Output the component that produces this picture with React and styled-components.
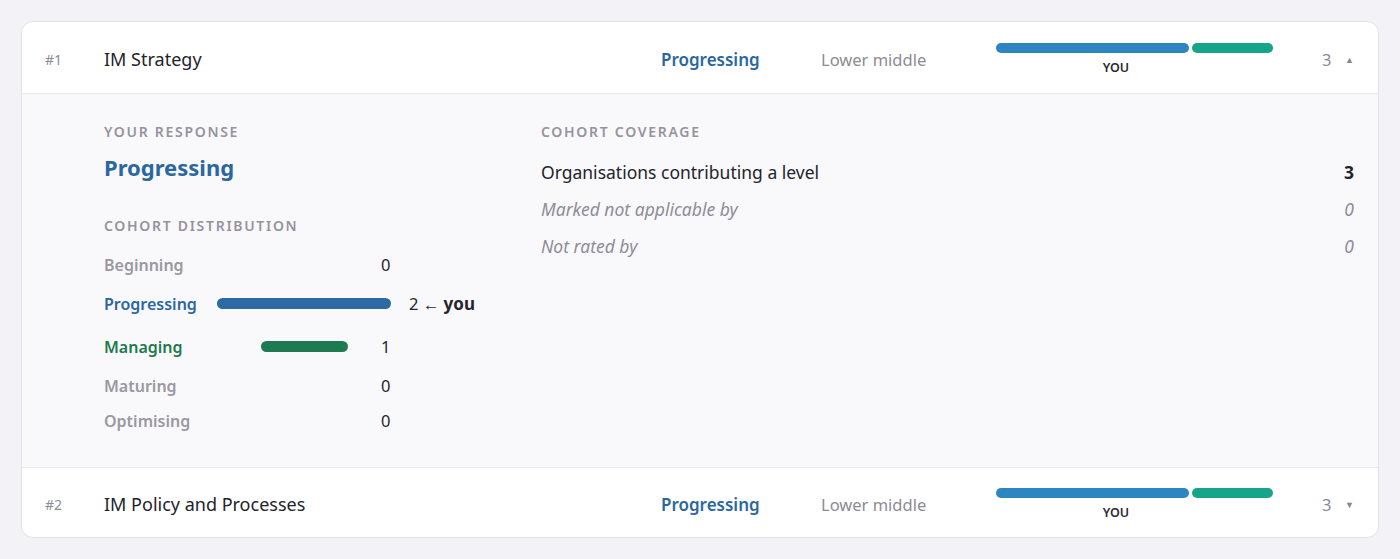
import React from 'react'
import styled, { createGlobalStyle } from 'styled-components'

const GlobalStyle = createGlobalStyle`
  * { box-sizing: border-box; }
  body {
    margin: 0;
    background: #f3f3f7;
    font-family: "Noto Sans", "Open Sans", sans-serif;
    color: #25252b;
  }
`

const Page = styled.div`
  padding: 21px;
`

const Card = styled.div`
  background: #fff;
  border: 1px solid #e1e1e8;
  border-radius: 12px;
  overflow: hidden;
`

const Header = styled.div`
  display: flex;
  align-items: center;
  height: ${p => p.$h}px;
  padding: 3px 25px 0 23px;
  border-top: ${p => (p.$divider ? '1px solid #e8e8ee' : 'none')};
  border-bottom: ${p => (p.$open ? '1px solid #e8e8ee' : 'none')};
`

const Num = styled.div`
  width: 59px;
  font-size: 14px;
  color: #8b8b96;
`

const Title = styled.div`
  flex: 1;
  font-size: 18px;
  color: #23232a;
`

const Level = styled.div`
  width: 160px;
  font-size: 17px;
  font-weight: 600;
  color: #2a67a0;
`

const Percentile = styled.div`
  width: 175px;
  font-size: 16.5px;
  color: #8d8b93;
`

const Compare = styled.div`
  width: 277px;
  display: flex;
  flex-direction: column;
  gap: 7px;
`

const Track = styled.div`
  width: 100%;
  display: flex;
  gap: 3px;
`

const Seg = styled.div`
  height: 10px;
  border-radius: 5px;
  background: ${p => p.$color};
`

const YouTag = styled.div`
  align-self: flex-start;
  transform: translateX(-50%);
  font-size: 12.5px;
  font-weight: 600;
  line-height: 16px;
  color: #2a2a30;
`

const Count = styled.div`
  margin-left: 49px;
  width: 23px;
  font-size: 16.5px;
  color: #8b8b96;
`

const Caret = styled.div`
  width: 8px;
  font-size: 9px;
  color: #85858f;
  margin-top: 1px;
`

const Panel = styled.div`
  background: #f9f9fc;
  padding: 28px 24px 29px 82px;
  display: grid;
  grid-template-columns: 397px 1fr;
  column-gap: 40px;
`

const Eyebrow = styled.div`
  font-size: 14px;
  font-weight: 600;
  letter-spacing: 1.7px;
  text-transform: uppercase;
  color: #96939c;
  margin-top: ${p => p.$mt || 0}px;
`

const BigLevel = styled.div`
  font-size: 22px;
  font-weight: 700;
  color: #2a67a0;
  margin-top: 11px;
`

const DistList = styled.div`
  margin-top: 12px;
  display: flex;
  flex-direction: column;
`

const DistRow = styled.div`
  display: grid;
  grid-template-columns: 113px 174px auto;
  align-items: center;
  min-height: ${p => (p.$bar ? 43 : 35)}px;
`

const DistLabel = styled.div`
  font-size: 16px;
  font-weight: 600;
  color: ${p => p.$color};
`

const BarSlot = styled.div`
  display: flex;
  justify-content: center;
`

const Bar = styled.div`
  height: 11px;
  border-radius: 6px;
  background: ${p => p.$color};
`

const DistCount = styled.div`
  font-size: 16.5px;
  color: #25252b;
  margin-left: ${p => (p.$wide ? 18 : -10)}px;
  white-space: nowrap;
  b { font-weight: 700; font-size: 17px; }
`

const CoverList = styled.div`
  margin-top: 19px;
  display: flex;
  flex-direction: column;
  gap: 12px;
`

const CoverRow = styled.div`
  display: flex;
  justify-content: space-between;
  font-size: 17.5px;
  line-height: 25px;
  font-style: ${p => (p.$muted ? 'italic' : 'normal')};
  color: ${p => (p.$muted ? '#8f8d96' : '#23232a')};
`

const CoverValue = styled.span`
  font-weight: ${p => (p.$bold ? 700 : 400)};
`

const levels = [
  { name: 'Beginning', count: 0, color: '#9a98a0' },
  { name: 'Progressing', count: 2, color: '#2a67a0', bar: '#2c6aa2', you: true },
  { name: 'Managing', count: 1, color: '#1e7a4c', bar: '#1f7a52' },
  { name: 'Maturing', count: 0, color: '#9a98a0' },
  { name: 'Optimising', count: 0, color: '#9a98a0' },
]

const maxCount = 2

// cohort split for the header bar, and where "you" sit along it
const split = 69.5
const youAt = 43.3

function CapabilityHeader({ num, title, open, divider, h }) {
  return (
    <Header $open={open} $divider={divider} $h={h}>
      <Num>#{num}</Num>
      <Title>{title}</Title>
      <Level>Progressing</Level>
      <Percentile>Lower middle</Percentile>
      <Compare>
        <Track>
          <Seg $color="#2e86c1" style={{ width: `${split}%` }} />
          <Seg $color="#17a589" style={{ flex: 1 }} />
        </Track>
        <YouTag style={{ marginLeft: `${youAt}%` }}>YOU</YouTag>
      </Compare>
      <Count>3</Count>
      <Caret>{open ? '▲' : '▼'}</Caret>
    </Header>
  )
}

export default function App() {
  return (
    <Page>
      <GlobalStyle />
      <Card>
        <CapabilityHeader num={1} title="IM Strategy" open h={72} />
        <Panel>
          <div>
            <Eyebrow>Your response</Eyebrow>
            <BigLevel>Progressing</BigLevel>
            <Eyebrow $mt={34}>Cohort distribution</Eyebrow>
            <DistList>
              {levels.map(l => (
                <DistRow key={l.name} $bar={!!l.bar}>
                  <DistLabel $color={l.color}>{l.name}</DistLabel>
                  <BarSlot>
                    {l.bar && (
                      <Bar $color={l.bar} style={{ width: `${(l.count / maxCount) * 100}%` }} />
                    )}
                  </BarSlot>
                  <DistCount $wide={l.you}>
                    {l.count}
                    {l.you && <> ← <b>you</b></>}
                  </DistCount>
                </DistRow>
              ))}
            </DistList>
          </div>
          <div>
            <Eyebrow>Cohort coverage</Eyebrow>
            <CoverList>
              <CoverRow>
                <span>Organisations contributing a level</span>
                <CoverValue $bold>3</CoverValue>
              </CoverRow>
              <CoverRow $muted>
                <span>Marked not applicable by</span>
                <CoverValue>0</CoverValue>
              </CoverRow>
              <CoverRow $muted>
                <span>Not rated by</span>
                <CoverValue>0</CoverValue>
              </CoverRow>
            </CoverList>
          </div>
        </Panel>
        <CapabilityHeader num={2} title="IM Policy and Processes" divider h={70} />
      </Card>
    </Page>
  )
}
